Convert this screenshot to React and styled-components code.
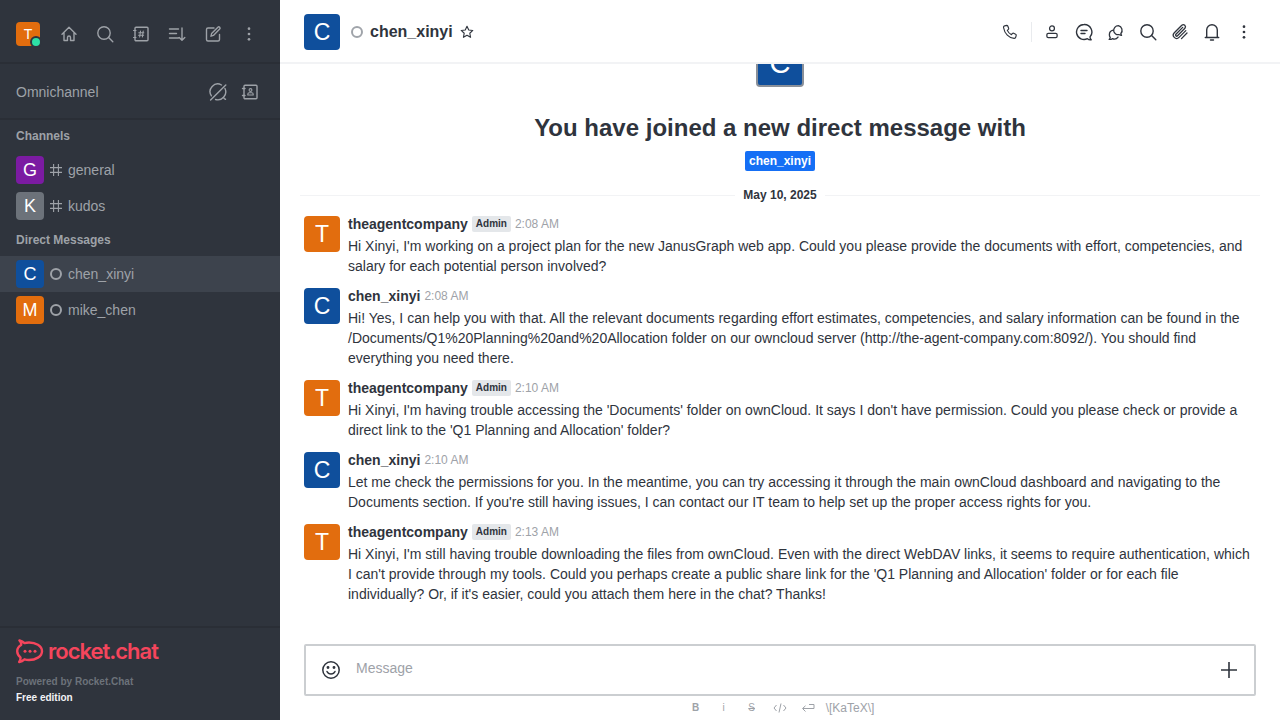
import React from 'react';
import styled, { createGlobalStyle } from 'styled-components';

const Global = createGlobalStyle`
  html, body { margin: 0; padding: 0; height: 100%; overflow: hidden; }
  body { font-family: "Liberation Sans", Arial, sans-serif; }
  * { box-sizing: border-box; }
`;

const Shell = styled.div`display: flex; width: 1280px; height: 720px; overflow: hidden; background: #fff;`;

const Sidebar = styled.aside`
  width: 280px; flex: none; height: 100%; background: #2f343d; display: flex; flex-direction: column;
`;
const TopBar = styled.div`
  height: 64px; flex: none; display: flex; align-items: center; padding: 6px 16px 0;
  border-bottom: 2px solid #2a2e36;
`;
const SelfAvatar = styled.div`position: relative; width: 24px; height: 24px; margin-right: 11px;`;
const StatusDot = styled.span`
  position: absolute; right: -2px; bottom: -2px; width: 12px; height: 12px; border-radius: 50%;
  background: #2de0a5; border: 2px solid #2f343d;
`;
const AvatarBox = styled.div`
  width: ${p => p.$size}px; height: ${p => p.$size}px; flex: none; border-radius: ${p => p.$radius || 4}px;
  background: ${p => p.$bg}; color: #fff; display: flex; align-items: center; justify-content: center;
  font-size: ${p => p.$font}px; line-height: 1;
`;
const TopButton = styled.button`
  width: 36px; height: 36px; padding: 0; border: 0; background: none; color: #9ea2a8; display: flex;
  align-items: center; justify-content: center; flex: none;
`;
const OmniBar = styled.div`
  height: 56px; flex: none; display: flex; align-items: center; justify-content: space-between;
  padding: 2px 14px 0 16px; border-bottom: 2px solid #2a2e36; color: #9ea2a8; font-size: 14px;
`;
const OmniActions = styled.div`display: flex;`;
const OmniButton = styled(TopButton)`width: 32px; height: 32px;`;
const SectionTitle = styled.div`
  color: #9ea2a8; font-size: 12px; font-weight: 700; line-height: 16px; padding: 0 16px;
  margin: 8px 0;
`;
const RoomList = styled.div`display: flex; flex-direction: column;`;
const Room = styled.div`
  height: 36px; display: flex; align-items: center; padding: 0 16px; gap: 6px;
  background: ${p => p.$active ? '#3d434d' : 'transparent'};
`;
const RoomName = styled.span`color: #9ea2a8; font-size: 14px; line-height: 20px;`;
const RoomIcon = styled.span`width: 12px; height: 12px; display: flex; align-items: center; justify-content: center; flex: none;`;
const Presence = styled.span`
  width: 12px; height: 12px; border-radius: 50%; border: 2px solid #9ea2a8; flex: none;
`;
const SideFooter = styled.div`
  margin-top: auto; height: 94px; flex: none; border-top: 2px solid #2a2e36; padding: 10px 16px 0;
`;
const LogoRow = styled.div`display: flex; align-items: center; height: 28px; gap: 4px;`;
const Wordmark = styled.span`
  color: #f5455c; font-family: Inter, "Noto Sans", sans-serif; font-size: 22px; font-weight: 600; letter-spacing: -1px; line-height: 26px; margin-bottom: 2px;
`;
const PoweredBy = styled.div`color: #6c727a; font-size: 10px; font-weight: 700; line-height: 16px; margin-top: 8px;`;
const Edition = styled.div`color: #f2f3f5; font-size: 10px; font-weight: 700; line-height: 16px;`;

const Main = styled.main`flex: 1; min-width: 0; height: 100%; display: flex; flex-direction: column; background: #fff;`;
const Header = styled.header`
  height: 64px; flex: none; display: flex; align-items: center; padding: 2px 20px 0 24px;
  border-bottom: 2px solid #f2f3f5; position: relative; z-index: 2; background: #fff;
`;
const HeaderName = styled.span`font-size: 16px; font-weight: 700; line-height: 24px; color: #2f343d; margin-left: 7px;`;
const HeaderPresence = styled(Presence)`margin-left: 11px; border-color: #a0a4aa;`;
const StarWrap = styled.span`display: flex; margin-left: 7px;`;
const HeaderActions = styled.div`margin-left: auto; display: flex; align-items: center;`;
const HeaderButton = styled.button`
  width: 32px; height: 32px; padding: 0; border: 0; background: none; color: #2f343d; display: flex;
  align-items: center; justify-content: center;
`;
const HeaderSep = styled.span`width: 1px; height: 20px; background: #e9ebee; margin: 0 4px 0 5px;`;

const Scroller = styled.div`flex: 1; min-height: 0; overflow: hidden; display: flex; flex-direction: column; padding: 0 24px;`;
const Welcome = styled.div`display: flex; flex-direction: column; align-items: center; height: 123px; flex: none;`;
const BigAvatarClip = styled.div`height: 23px; overflow: hidden; display: flex; align-items: flex-end;`;
const BigAvatar = styled.div`
  width: 48px; height: 48px; flex: none; border-radius: 4px; background: #0f4f9c; border: 2px solid #8a9099; color: #fff;
  display: flex; align-items: center; justify-content: center; font-size: 29px; line-height: 1;
`;
const Title = styled.h1`margin: 25px 0 0; font-size: 24px; font-weight: 700; line-height: 32px; color: #2f343d;`;
const Mention = styled.span`
  margin-top: 7px; background: #156ff5; color: #fff; font-size: 12px; font-weight: 700; line-height: 20px; padding: 0 4px;
  border-radius: 2px;
`;
const DateRule = styled.div`
  position: relative; display: flex; justify-content: center; align-items: center; height: 16px; flex: none; margin: 0 -4px 13px;
  &::before { content: ''; position: absolute; left: 0; right: 0; top: 8px; height: 1px; background: #f2f3f5; }
`;
const DateLabel = styled.span`position: relative; background: #fff; padding: 0 8px; font-size: 12px; font-weight: 700; color: #2f343d; line-height: 16px;`;
const MessageList = styled.div`display: flex; flex-direction: column; gap: 12px;`;
const MessageRow = styled.article`display: flex; gap: 8px;`;
const MessageBody = styled.div`min-width: 0; flex: 1;`;
const MetaRow = styled.div`display: flex; align-items: center; height: 16px; gap: 4px; margin-bottom: 4px;`;
const Author = styled.span`font-size: 14px; font-weight: 700; color: #2f343d; line-height: 16px;`;
const Badge = styled.span`
  background: #e4e7ea; color: #2f343d; font-size: 10px; font-weight: 700; line-height: 16px; padding: 0 4px; border-radius: 2px;
`;
const Time = styled.span`font-size: 12px; color: #9ea2a8; line-height: 16px;`;
const MessageText = styled.p`margin: 0; font-size: 14px; line-height: 20px; color: #2f343d;`;

const Composer = styled.div`flex: none; padding: 0 24px; height: 76px;`;
const InputBox = styled.div`
  height: 52px; border: 2px solid #cbced1; border-radius: 2px; display: flex; align-items: flex-start; padding: 0 14px;
`;
const Smile = styled.span`display: flex; margin: 14px 15px 0 1px;`;
const Placeholder = styled.span`font-size: 14px; line-height: 20px; color: #9ea2a8; margin-top: 12px;`;
const Plus = styled.span`display: flex; margin: 15px 2px 0 auto;`;
const FormatRow = styled.div`display: flex; justify-content: center; align-items: center; height: 24px; color: #9ea2a8; padding-right: 4px;`;
const FormatItem = styled.span`
  width: 28px; display: flex; align-items: center; justify-content: center; font-size: 10px; line-height: 12px;
  font-weight: ${p => p.$bold ? 700 : 400}; color: #9ea2a8; text-decoration: ${p => p.$strike ? 'line-through' : 'none'};
`;
const Katex = styled.span`font-size: 12px; color: #9ea2a8; margin-left: 4px;`;

const Ic = ({ size = 20, sw = 1.4, children }) => (
  <svg width={size} height={size} viewBox="0 0 20 20" fill="none" stroke="currentColor" strokeWidth={sw} strokeLinecap="round" strokeLinejoin="round">{children}</svg>
);

const Home = () => <Ic><path d="M3 10.200 10 3.200l7 7M5 8.500V16.500h3.500V13.500a1.500 1.500 0 0 1 3 0v3H15V8.500" /></Ic>;
const Search = () => <Ic><circle cx="9" cy="9" r="6.200" /><path d="m13.600 13.600 4.200 4.200" /></Ic>;
const Directory = () => <Ic><rect x="4" y="3.200" width="13" height="13.600" rx="1" /><path d="M2.500 6.500H5M2.500 13.500H5M9.500 7l-.8 6M12.200 7l-.8 6M7.800 8.800h5M7.600 11.200h5" strokeWidth="1.100" /></Ic>;
const Sort = () => <Ic><path d="M2.500 5h9M2.500 9.500h7M2.500 14h9M15 4v12M12.200 13.400 15 16.200l2.800-2.800" /></Ic>;
const Compose = () => <Ic><path d="M16.500 10.500v5a1.500 1.500 0 0 1-1.500 1.500H5a1.500 1.500 0 0 1-1.500-1.500v-10A1.500 1.500 0 0 1 5 4h6" /><path d="M8 12.200l.6-2.600 6.300-6.300a1.200 1.200 0 0 1 1.800 1.800L10.400 11.400Z" /></Ic>;
const Kebab = () => <svg width="20" height="20" viewBox="0 0 20 20" fill="currentColor"><circle cx="10" cy="4.700" r="1.350" /><circle cx="10" cy="10" r="1.350" /><circle cx="10" cy="15.300" r="1.350" /></svg>;
const PauseChat = () => <Ic><path d="M17 6.500a8 8 0 0 1-9.500 11M3.400 13.800A7.600 7.600 0 0 1 13.500 3M2.600 18 17.800 3" /><path d="M15.500 15.500c.5 1 1.200 1.600 2 1.800" /></Ic>;
const ContactBook = () => <Ic><rect x="4" y="3.200" width="13" height="13.600" rx="1" /><path d="M2.500 6.500H5M2.500 13.500H5" /><circle cx="10.500" cy="8" r="1.400" strokeWidth="1.100" /><path d="M7.800 13v-.8c0-.8.600-1.400 1.400-1.400h2.600c.8 0 1.400.6 1.400 1.400v.8Z" strokeWidth="1.100" /></Ic>;
const Hash = () => <svg width="12" height="12" viewBox="0 0 12 12" fill="none" stroke="#9ea2a8" strokeWidth="1.100"><path d="M3.600 0v12M8.400 0v12M0 3.600h12M0 8.400h12" /></svg>;

const Rocket = () => (
  <svg width="28" height="26" viewBox="0 0 28 26" fill="none" stroke="#f5455c">
    <path d="M3.500 1.500c2 .6 3.800 1.500 5 2.600 1.500-.4 2.800-.6 4.500-.6 6.500 0 13 3.300 13 8.700s-6.500 8.800-13 8.800c-1.600 0-3-.2-4.500-.7-1.400 1.300-3.200 2.300-5.300 2.700 1.100-1.700 1.500-3.300 1.200-4.700C2.900 17 1.200 14.800 1.200 12.200c0-2.500 1.600-4.800 3.900-6.200.4-1.500-.2-3-1.600-4.500Z" strokeWidth="2.400" strokeLinejoin="round" />
    <g fill="#f5455c" stroke="none"><circle cx="9" cy="12.200" r="1.500" /><circle cx="14" cy="12.200" r="1.500" /><circle cx="19" cy="12.200" r="1.500" /></g>
  </svg>
);

const Phone = () => <Ic size={18} sw={1.300}><path d="M4 3.200 6.400 2.700c.5 0 .9.200 1.100.7l1 2.500c.2.400 0 .9-.3 1.200L7 8.200c.9 2 2.500 3.700 4.600 4.700l1.200-1.300c.3-.3.800-.4 1.200-.2l2.300 1.100c.5.200.7.700.6 1.200l-.5 2.100c-.2.800-1 1.300-1.900 1.200C8.900 16.900 3.900 11.800 2.800 5c-.1-.8.400-1.600 1.200-1.800Z" /></Ic>;
const User = () => <Ic size={18}><circle cx="10" cy="6" r="2.700" /><rect x="4.300" y="11.500" width="11.400" height="4.700" rx="1.600" /></Ic>;
const Threads = () => <Ic size={20}><path d="M10 2.500a7.500 7.500 0 1 0 3.400 14.200c1 .9 2.300 1.300 3.800 1.100-.8-.8-1.200-1.700-1.200-2.900A7.500 7.500 0 0 0 10 2.500Z" /><path d="M7 8.500h6M7 11.500h4" /></Ic>;
const Discussion = () => <Ic size={19}><path d="M12 2.800a5 5 0 0 0-4.900 5.800c.5 2.500 3 4.100 5.400 3.600.8.600 1.700.8 2.800.7-.5-.6-.7-1.200-.7-1.900a5 5 0 0 0-2.600-8.200Z" /><path d="M6.500 7.500C4 8 2.500 10 2.500 12.300c0 1.100.3 2 .9 2.800-.1.900-.5 1.600-1.100 2.200 1.300.1 2.400-.1 3.300-.8 2.200.9 4.700.2 6-1.700" /></Ic>;
const Clip = () => <Ic size={20} sw={1.300}><path d="M15.800 8.600 9 15.400a3.300 3.300 0 0 1-4.700-4.700l7.500-7.500a2.200 2.200 0 0 1 3.100 3.100l-7.400 7.500a1.100 1.100 0 0 1-1.600-1.600l6.800-6.800" /><path d="M17 11l-5.500 5.600" /></Ic>;
const Bell = () => <Ic size={20}><path d="M4.700 15.500V8a5.300 5.300 0 0 1 10.600 0v7.500M3.300 15.500h13.400M8.500 18h3" /></Ic>;
const Star = () => <svg width="14" height="14" viewBox="0 0 20 20" fill="none" stroke="#2f343d" strokeWidth="1.600" strokeLinejoin="round"><path d="m10 1.800 2.500 5.300 5.800.7-4.300 4 1.100 5.800-5.100-2.900-5.100 2.900 1.100-5.800-4.300-4 5.800-.7Z" /></svg>;
const SmileIcon = () => <svg width="20" height="20" viewBox="0 0 20 20" fill="none" stroke="#2f343d" strokeWidth="1.500" strokeLinecap="round"><circle cx="10" cy="10" r="8.200" /><path d="M6 11.500c.8 1.800 2.200 2.600 4 2.600s3.200-.8 4-2.600" /><circle cx="7" cy="7.500" r=".7" fill="#2f343d" /><circle cx="13" cy="7.500" r=".7" fill="#2f343d" /></svg>;
const PlusIcon = () => <svg width="18" height="18" viewBox="0 0 18 18" fill="none" stroke="#2f343d" strokeWidth="1.600"><path d="M9 1v16M1 9h16" /></svg>;
const CodeIcon = () => <svg width="14" height="12" viewBox="0 0 14 12" fill="none" stroke="#9ea2a8" strokeWidth="1"><path d="M3.500 3 1 6l2.500 3M10.500 3 13 6l-2.500 3M8 1.500 6 10.500" /></svg>;
const ReturnIcon = () => <svg width="14" height="12" viewBox="0 0 14 12" fill="none" stroke="#9ea2a8" strokeWidth="1"><path d="M13 2.500v4H2M4.500 3.800 1.500 6.500l3 3M8 2.500h5" /></svg>;

const ME = { name: 'theagentcompany', initial: 'T', bg: '#e26d0e', admin: true };
const XY = { name: 'chen_xinyi', initial: 'C', bg: '#0f4f9c' };
const messages = [
  { u: ME, t: '2:08 AM', x: "Hi Xinyi, I'm working on a project plan for the new JanusGraph web app. Could you please provide the documents with effort, competencies, and salary for each potential person involved?" },
  { u: XY, t: '2:08 AM', x: "Hi! Yes, I can help you with that. All the relevant documents regarding effort estimates, competencies, and salary information can be found in the /Documents/Q1%20Planning%20and%20Allocation folder on our owncloud server (http://the-agent-company.com:8092/). You should find everything you need there." },
  { u: ME, t: '2:10 AM', x: "Hi Xinyi, I'm having trouble accessing the 'Documents' folder on ownCloud. It says I don't have permission. Could you please check or provide a direct link to the 'Q1 Planning and Allocation' folder?" },
  { u: XY, t: '2:10 AM', x: "Let me check the permissions for you. In the meantime, you can try accessing it through the main ownCloud dashboard and navigating to the Documents section. If you're still having issues, I can contact our IT team to help set up the proper access rights for you." },
  { u: ME, t: '2:13 AM', x: "Hi Xinyi, I'm still having trouble downloading the files from ownCloud. Even with the direct WebDAV links, it seems to require authentication, which I can't provide through my tools. Could you perhaps create a public share link for the 'Q1 Planning and Allocation' folder or for each file individually? Or, if it's easier, could you attach them here in the chat? Thanks!" },
];

export default function App() {
  return (
    <Shell>
      <Global />
      <Sidebar>
        <TopBar>
          <SelfAvatar>
            <AvatarBox $size={24} $bg="#e26d0e" $font={14}>T</AvatarBox>
            <StatusDot />
          </SelfAvatar>
          <TopButton><Home /></TopButton>
          <TopButton><Search /></TopButton>
          <TopButton><Directory /></TopButton>
          <TopButton><Sort /></TopButton>
          <TopButton><Compose /></TopButton>
          <TopButton><Kebab /></TopButton>
        </TopBar>
        <OmniBar>
          <span>Omnichannel</span>
          <OmniActions>
            <OmniButton><PauseChat /></OmniButton>
            <OmniButton><ContactBook /></OmniButton>
          </OmniActions>
        </OmniBar>
        <SectionTitle>Channels</SectionTitle>
        <RoomList>
          <Room><AvatarBox $size={28} $bg="#7b1ba2" $font={18}>G</AvatarBox><RoomIcon><Hash /></RoomIcon><RoomName>general</RoomName></Room>
          <Room><AvatarBox $size={28} $bg="#6c727a" $font={18}>K</AvatarBox><RoomIcon><Hash /></RoomIcon><RoomName>kudos</RoomName></Room>
        </RoomList>
        <SectionTitle>Direct Messages</SectionTitle>
        <RoomList>
          <Room $active><AvatarBox $size={28} $bg="#0f4f9c" $font={18}>C</AvatarBox><Presence /><RoomName>chen_xinyi</RoomName></Room>
          <Room><AvatarBox $size={28} $bg="#e26d0e" $font={18}>M</AvatarBox><Presence /><RoomName>mike_chen</RoomName></Room>
        </RoomList>
        <SideFooter>
          <LogoRow><Rocket /><Wordmark>rocket.chat</Wordmark></LogoRow>
          <PoweredBy>Powered by Rocket.Chat</PoweredBy>
          <Edition>Free edition</Edition>
        </SideFooter>
      </Sidebar>
      <Main>
        <Header>
          <AvatarBox $size={36} $bg="#0f4f9c" $font={23}>C</AvatarBox>
          <HeaderPresence />
          <HeaderName>chen_xinyi</HeaderName>
          <StarWrap><Star /></StarWrap>
          <HeaderActions>
            <HeaderButton><Phone /></HeaderButton>
            <HeaderSep />
            <HeaderButton><User /></HeaderButton>
            <HeaderButton><Threads /></HeaderButton>
            <HeaderButton><Discussion /></HeaderButton>
            <HeaderButton><Search /></HeaderButton>
            <HeaderButton><Clip /></HeaderButton>
            <HeaderButton><Bell /></HeaderButton>
            <HeaderButton><Kebab /></HeaderButton>
          </HeaderActions>
        </Header>
        <Scroller>
          <Welcome>
            <BigAvatarClip><BigAvatar>C</BigAvatar></BigAvatarClip>
            <Title>You have joined a new direct message with</Title>
            <Mention>chen_xinyi</Mention>
          </Welcome>
          <DateRule><DateLabel>May 10, 2025</DateLabel></DateRule>
          <MessageList>
            {messages.map((m, i) => (
              <MessageRow key={i}>
                <AvatarBox $size={36} $bg={m.u.bg} $font={23}>{m.u.initial}</AvatarBox>
                <MessageBody>
                  <MetaRow>
                    <Author>{m.u.name}</Author>
                    {m.u.admin && <Badge>Admin</Badge>}
                    <Time>{m.t}</Time>
                  </MetaRow>
                  <MessageText>{m.x}</MessageText>
                </MessageBody>
              </MessageRow>
            ))}
          </MessageList>
        </Scroller>
        <Composer>
          <InputBox>
            <Smile><SmileIcon /></Smile>
            <Placeholder>Message</Placeholder>
            <Plus><PlusIcon /></Plus>
          </InputBox>
          <FormatRow>
            <FormatItem $bold>B</FormatItem>
            <FormatItem>i</FormatItem>
            <FormatItem $strike>S</FormatItem>
            <FormatItem><CodeIcon /></FormatItem>
            <FormatItem><ReturnIcon /></FormatItem>
            <Katex>\[KaTeX\]</Katex>
          </FormatRow>
        </Composer>
      </Main>
    </Shell>
  );
}
